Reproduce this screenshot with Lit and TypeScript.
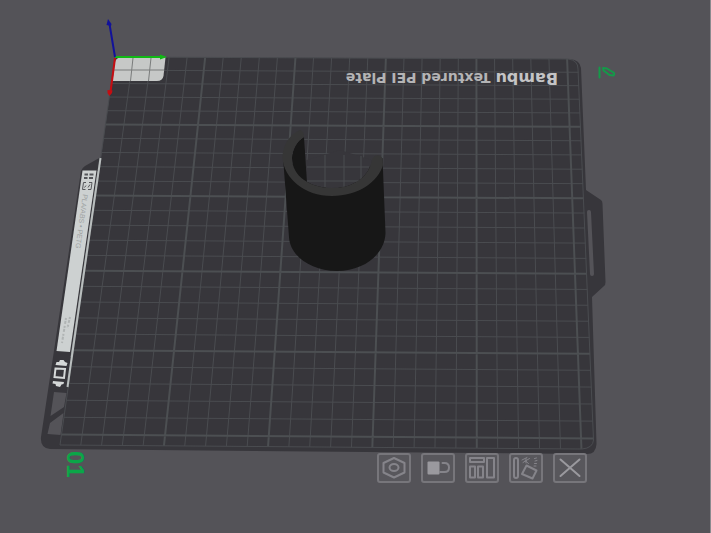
import { LitElement, html, svg, css } from "lit";
import { customElement } from "lit/decorators.js";

type Point = [number, number];

/** Bed size in grid cells (256 mm, 10 mm per cell). */
const BED = 25.6;
const TL: Point = [115, 57];
const TR: Point = [578, 59];
const BR: Point = [594, 449];
const BL: Point = [60, 445];

/** Projects a bed position (in cells) to the viewport. */
const project = (() => {
  const dx1 = TR[0] - BR[0];
  const dx2 = BL[0] - BR[0];
  const dx3 = TL[0] - TR[0] + BR[0] - BL[0];
  const dy1 = TR[1] - BR[1];
  const dy2 = BL[1] - BR[1];
  const dy3 = TL[1] - TR[1] + BR[1] - BL[1];
  const det = dx1 * dy2 - dx2 * dy1;
  const g = (dx3 * dy2 - dx2 * dy3) / det;
  const h = (dx1 * dy3 - dx3 * dy1) / det;
  const a = TR[0] - TL[0] + g * TR[0];
  const b = BL[0] - TL[0] + h * BL[0];
  const d = TR[1] - TL[1] + g * TR[1];
  const e = BL[1] - TL[1] + h * BL[1];
  return (u: number, v: number): Point => {
    const s = u / BED;
    const t = v / BED;
    const w = g * s + h * t + 1;
    return [(a * s + b * t + TL[0]) / w, (d * s + e * t + TL[1]) / w];
  };
})();

const segment = (from: Point, to: Point) =>
  `M${from.map((n) => n.toFixed(2)).join(" ")}L${to.map((n) => n.toFixed(2)).join(" ")}`;

function gridPath(major: boolean): string {
  let path = "";
  for (let i = 1; i <= 25; i++) {
    if ((i % 5 === 0) !== major) continue;
    path += segment(project(i, 0), project(i, BED));
    path += segment(project(0, i), project(BED, i));
  }
  return path;
}

@customElement("plate-view")
export class PlateView extends LitElement {
  static styles = css`
    :host {
      display: block;
    }
    .scene {
      display: block;
      width: 100%;
      height: auto;
    }
    .plate {
      fill: #37363b;
    }
    .cutout {
      fill: #545358;
    }
    .slot {
      stroke: #545358;
      stroke-width: 4;
      stroke-linecap: round;
    }
    .minor,
    .major,
    .edge {
      fill: none;
      stroke: #4a4c50;
      stroke-width: 1;
    }
    .major {
      stroke: #4c4f52;
      stroke-width: 2;
    }
    .tag {
      fill: #c6c8c7;
    }
    .tag-grid {
      fill: none;
      stroke: #7a7c7c;
    }
    .strip {
      fill: #cdd1d1;
    }
    .strip-line {
      stroke: #b9bebe;
      stroke-width: 2;
    }
    .strip-thin {
      stroke: #777b7c;
    }
    .mark {
      fill: none;
      stroke: #55565a;
      stroke-width: 2;
    }
    .corner {
      fill: none;
      stroke: #55565a;
    }
    .fine {
      stroke: #b0b4b4;
      stroke-width: 2;
      stroke-dasharray: 2 1 3 2;
    }
    .light {
      fill: #d5d8d8;
    }
    .light-line {
      fill: none;
      stroke: #d5d8d8;
      stroke-width: 2;
    }
    .title {
      font: bold 14px "DejaVu Sans", sans-serif;
      fill: #b4b4b5;
    }
    .brand {
      font-size: 16px;
      fill: #c4c4c5;
    }
    .material {
      font: 7px "Liberation Sans", Arial, sans-serif;
      fill: #9da1a1;
    }
    .number {
      font: bold 24px "Liberation Sans", Arial, sans-serif;
      fill: #0ba648;
    }
    .pen {
      fill: none;
      stroke: #149a49;
      stroke-width: 2;
      stroke-linejoin: round;
      stroke-linecap: round;
    }
    .wall {
      fill: #171717;
    }
    .rim {
      fill: #363636;
    }
    .axis {
      stroke-width: 2;
    }
    .x {
      stroke: #c50d12;
      fill: #c50d12;
    }
    .y {
      stroke: #10b914;
      fill: #10b914;
    }
    .z {
      stroke: #12129a;
      fill: #12129a;
    }
    .tip {
      stroke: none;
    }
  `;

  private renderPlate() {
    return svg`
      <path class="plate" d="M115 57L570 59Q580 60 581 68L586 190L601 200Q602.500 201 602.500 204L605.500 282Q605.500 285 604 286L592 297L596.500 444Q596 454 587 454L50 449Q40 448 41 437L81 171Q82 168 85 166L101 157Z"/>
      <path class="cutout" d="M54 392L66.500 393L64 407L50.500 416Z M50 423L63.500 413L60.500 435L47.500 434Z"/>
      <line class="slot" x1="589" y1="212" x2="592" y2="274"/>
      <path class="minor" d=${gridPath(false)}/>
      <path class="major" d=${gridPath(true)}/>
      <path class="edge" d="M115 57L568 59Q578 60 578 69L593.500 440Q593 448 582 449L60 445L115 57Z"/>
      <path class="tag" d="M120 57.500L165.500 57.500L163.500 76Q162.500 81 157 81L112.500 81L115 62Q116 58 120 57.500Z"/>
      <path class="tag-grid" d="M133 58L130.500 81M151 58L148.500 81M114 70H164"/>
    `;
  }

  private renderStrip() {
    return svg`
      <path class="strip" d="M82.500 170.500H96.500L70 352L56.500 351Z"/>
      <path class="strip-thin" d="M98 171L71 357"/>
      <path class="strip-line" d="M100.500 158L67.500 387"/>
      <path class="mark" d="M84.500 174.500H88M89.500 174.500H93.500M84 178H87.500M89 178H93"/>
      <path class="corner" d="M86 182.500H83.500L82.500 189.500H85.500M89 182.500H92L91 189.500H88M84.500 187.500L86 185.500M88 187.500L90 184.500"/>
      <text class="material" transform="translate(83 194) rotate(98)">PLA/ABS • PETG</text>
      <path class="fine" d="M70 317L67.500 328M66 318L62 343"/>
      <path class="light" d="M60 360L63.500 360L65 362L67.500 363L66.500 366L55.500 365L56.500 362L59 362Z"/>
      <path class="light-line" d="M55.500 368.500L65 369L64 378L54.500 377Z"/>
      <path class="light" d="M53 381L64 382L63.500 384L61.500 384.500L60 387L56 386L55.500 384L52.500 383.500Z"/>
    `;
  }

  private renderModel() {
    return svg`
      <path class="wall" d="M283 157L289 237C290 256 311 271 337 271C364 271 385 254 385.500 233L382.500 158L332 192Z"/>
      <path class="plate" d="M292 158C292 176 310 188 332 188C355 188 369 176 372 160L340 150L307 160Z"/>
      <path class="minor" d="M307 167H369M307 181H362M325 155V187M344 155V187M361 156V182"/>
      <path class="wall" d="M304 137C297 141 292 150 292 158C292 170 299 179 307 183Z"/>
      <path class="rim" d="M300 130C288 135 282.500 147 282.500 158C284 178 304 196 332 196C358 196 378 182 383 165L382.500 159C381 154 374 154 372 160C369 176 355 188 332 188C310 188 292 176 292 158C292 150 297 141 304 137Q304 131 300 130Z"/>
    `;
  }

  private renderAxes() {
    return svg`
      <g class="axis y"><path d="M115 57H162"/><path class="tip" d="M160 54.500L167 57L160 59.500Z"/></g>
      <g class="axis x"><path d="M115 58L110.500 92"/><path class="tip" d="M107.500 90L112.500 90.500L112 93L109.500 96L107.500 93Z"/></g>
      <g class="axis z"><path d="M115 57L109.500 24"/><path class="tip" d="M106.500 25L108 19L111.500 24L111 26Z"/></g>
    `;
  }

  render() {
    return html`
      <svg class="scene" viewBox="0 0 711 533" role="img" aria-label="Build plate 01">
        ${this.renderPlate()} ${this.renderStrip()} ${this.renderModel()} ${this.renderAxes()}
        <text class="title" transform="translate(558 73) rotate(180)"><tspan class="brand">Bambu</tspan> Textured PEI Plate</text>
        <text class="number" transform="translate(67 451) rotate(90)">01</text>
        <path class="pen" d="M599.500 67.500V77.500M603 68L607 68.500L613.500 72.500Q615 74 613.500 75.500L609.500 75L603.500 70.500Z"/>
      </svg>
    `;
  }
}

@customElement("plate-toolbar")
export class PlateToolbar extends LitElement {
  static styles = css`
    :host {
      display: flex;
      gap: 10px;
    }
    .tool {
      box-sizing: border-box;
      width: 34px;
      height: 30px;
      padding: 0;
      border: 2px solid #77767b;
      border-radius: 3px;
      background: #58575c;
      color: #85848a;
      cursor: pointer;
    }
    .tool:hover {
      color: #c0c0c4;
    }
    .icon {
      display: block;
      width: 30px;
      height: 26px;
      fill: none;
      stroke: currentColor;
      stroke-width: 2;
      stroke-linejoin: round;
      stroke-linecap: round;
    }
    .solid {
      fill: #9a999e;
      stroke: none;
    }
    .thin {
      stroke-width: 1;
    }
    .cross {
      stroke: #9a999e;
    }
  `;

  private tools = [
    {
      label: "Plate settings",
      icon: svg`<path d="M15 3L25.500 8V17.500L15 22.500L4.500 17.500V8Z"/><ellipse cx="15" cy="12.500" rx="4.500" ry="3.500"/>`,
    },
    {
      label: "Lock plate",
      icon: svg`<rect class="solid" x="4.500" y="6.500" width="12" height="13" rx="1"/><path d="M19.500 8H21.500Q26 8 26 12.500Q26 17 21.500 17H17"/>`,
    },
    {
      label: "Arrange objects",
      icon: svg`<rect x="3" y="3" width="14" height="4"/><rect x="3" y="11.500" width="5" height="11"/><rect x="11" y="11.500" width="5" height="11"/><rect x="20" y="3" width="7" height="19.500"/>`,
    },
    {
      label: "Auto-orient objects",
      icon: svg`<rect x="3" y="3" width="4" height="20" rx="2"/><path d="M15.500 10.500L25.500 15.500L21.500 23.500L11 19Z"/><path class="thin" d="M11 5L16 2.500M12 7.500L18.500 3.500M14 5.500L17.500 8.500M15 3.500V8"/><path class="thin" d="M23.500 3.500L25.500 3M24 6L26 5.500M23.500 8.500H25.500M23 11H25"/>`,
    },
    {
      label: "Delete plate",
      icon: svg`<path class="cross" d="M5.500 4.500L24.500 21M24.500 4.500L5.500 21"/>`,
    },
  ];

  render() {
    return this.tools.map(
      (tool) => html`
        <button class="tool" type="button" aria-label=${tool.label}>
          <svg class="icon" viewBox="0 0 30 26" aria-hidden="true">${tool.icon}</svg>
        </button>
      `
    );
  }
}

@customElement("app-root")
export class AppRoot extends LitElement {
  static styles = css`
    :host {
      display: block;
      min-height: 100vh;
      box-sizing: border-box;
      background: #545358;
      border-right: 1px solid #8b8b8f;
    }
    .viewport {
      position: relative;
      margin-right: -1px;
      overflow: hidden;
    }
    .toolbar {
      position: absolute;
      left: 53%;
      top: 85%;
    }
  `;

  render() {
    return html`
      <main class="viewport">
        <plate-view></plate-view>
        <plate-toolbar class="toolbar"></plate-toolbar>
      </main>
    `;
  }
}
